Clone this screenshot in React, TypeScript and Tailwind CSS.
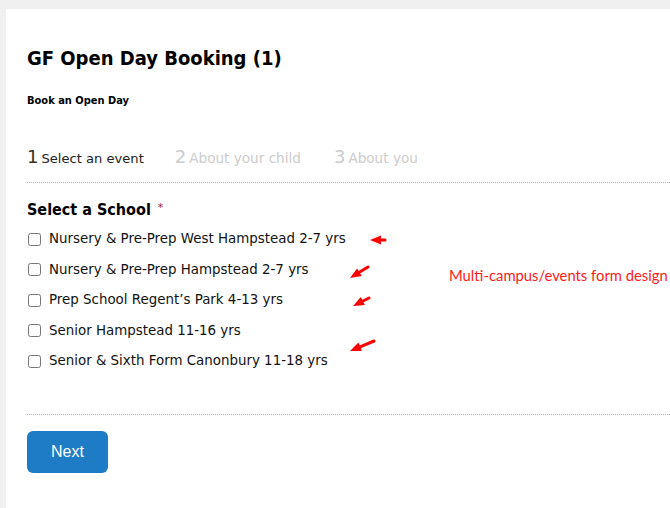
import React from "react";

const body = { fontFamily: '"DejaVu Sans", Verdana, sans-serif' };
const bold = {
  fontFamily: '"DejaVu Sans Condensed", "DejaVu Sans", Verdana, sans-serif',
  fontStretch: "condensed" as const,
};

const schools = [
  "Nursery & Pre-Prep West Hampstead 2-7 yrs",
  "Nursery & Pre-Prep Hampstead 2-7 yrs",
  "Prep School Regent\u2019s Park 4-13 yrs",
  "Senior Hampstead 11-16 yrs",
  "Senior & Sixth Form Canonbury 11-18 yrs",
];

function Arrow({ tip, tail }: { tip: [number, number]; tail: [number, number] }) {
  const [tx, ty] = tip;
  const [sx, sy] = tail;
  const dx = sx - tx;
  const dy = sy - ty;
  const len = Math.hypot(dx, dy);
  const ux = dx / len;
  const uy = dy / len;
  const hl = 11;
  const hw = 4.5;
  const bx = tx + ux * hl;
  const by = ty + uy * hl;
  const px = -uy;
  const py = ux;
  const pts = `${tx},${ty} ${bx + px * hw},${by + py * hw} ${bx - px * hw},${by - py * hw}`;
  return (
    <g>
      <line x1={bx - ux * 2} y1={by - uy * 2} x2={sx} y2={sy} stroke="#ff0000" strokeWidth={3} strokeLinecap="round" />
      <polygon points={pts} fill="#ff0000" />
    </g>
  );
}

export default function App() {
  return (
    <div className="relative h-[508px] w-[670px] overflow-hidden bg-[#f0f0f0] pl-[6px] pt-[9px]">
      <div className="h-[499px] bg-white pl-[21px] pt-[37px]">
        <h1 className="text-[20px] font-bold leading-[24px] text-black" style={bold}>
          GF Open Day Booking (1)
        </h1>
        <p className="mt-[24px] text-[11px] font-bold leading-[14px] text-black" style={bold}>
          Book an Open Day
        </p>

        <div className="mt-[38px] flex items-baseline" style={body}>
          <div className="flex items-baseline gap-[3px]">
            <span className="text-[18px] leading-[22px] text-[#3a3020]">1</span>
            <span className="text-[13.1px] leading-[22px] text-[#222]">Select an event</span>
          </div>
          <div className="ml-[31px] flex items-baseline gap-[3px] text-[#cccccc]">
            <span className="text-[18px] leading-[22px]">2</span>
            <span className="text-[13.6px] leading-[22px]">About your child</span>
          </div>
          <div className="ml-[33px] flex items-baseline gap-[3px] text-[#cccccc]">
            <span className="text-[18px] leading-[22px]">3</span>
            <span className="text-[13.6px] leading-[22px]">About you</span>
          </div>
        </div>

        <div className="mt-[12px] border-t border-dotted border-[#b5b5b5]" />

        <div className="mt-[17px] flex items-start">
          <span className="text-[16px] font-bold leading-[20px] text-black" style={bold}>
            Select a School
          </span>
          <span className="ml-[7px] mt-[2px] text-[11px] leading-[12px] text-[#9b1b3b]" style={body}>
            *
          </span>
        </div>

        <div className="mt-[4px] flex flex-col" style={body}>
          {schools.map((s) => (
            <label key={s} className="flex h-[30.5px] items-center">
              <input type="checkbox" className="m-0 ml-px h-[13px] w-[13px]" />
              <span className="ml-[8px] text-[13.4px] leading-[20px] text-[#111]">{s}</span>
            </label>
          ))}
        </div>

        <div className="mt-[37px] border-t border-dotted border-[#b5b5b5]" />

        <button
          className="mt-[16px] flex h-[42px] w-[81px] items-center justify-center rounded-[6px] bg-[#1e7bc6] text-[16px] text-white"
          style={{ fontFamily: '"Liberation Sans", Arial, sans-serif' }}
        >
          Next
        </button>
      </div>

      <div
        className="absolute left-[449px] top-[265px] whitespace-nowrap text-[14.8px] leading-[20px] text-[#ff1a1a]"
        style={{ fontFamily: 'Lato, "Open Sans", sans-serif' }}
      >
        Multi-campus/events form design
      </div>

      <svg className="pointer-events-none absolute left-0 top-0" width={670} height={508}>
        <Arrow tip={[370, 240]} tail={[385, 240]} />
        <Arrow tip={[350, 278]} tail={[368, 267]} />
        <Arrow tip={[353, 306]} tail={[369, 298]} />
        <Arrow tip={[350, 351]} tail={[374, 341]} />
      </svg>
    </div>
  );
}
